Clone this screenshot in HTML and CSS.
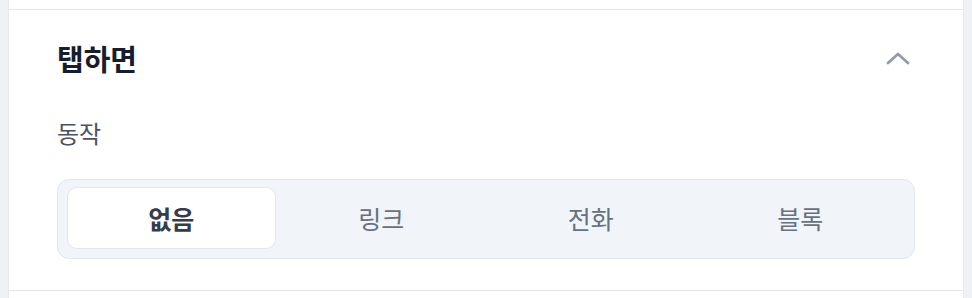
FILE: index.html
```html
<!DOCTYPE html>
<html lang="ko">
<head>
<meta charset="utf-8">
<link rel="stylesheet" href="styles.css">
</head>
<body>
<div class="panel">
  <div class="prev"></div>
  <section class="section">
    <div class="section-head">
      <h2 class="title">탭하면</h2>
      <svg class="chevron" width="24" height="14" viewBox="0 0 24 14"><path d="M2 12 L12 3 L22 12" fill="none" stroke="#939bab" stroke-width="2.8" stroke-linecap="round" stroke-linejoin="round"/></svg>
    </div>
    <div class="label">동작</div>
    <div class="segmented">
      <button class="seg active">없음</button>
      <button class="seg">링크</button>
      <button class="seg">전화</button>
      <button class="seg">블록</button>
    </div>
  </section>
  <div class="next"></div>
</div>
</body>
</html>
```
FILE: styles.css
```css
html, body {
  margin: 0;
  padding: 0;
  background: #eef1f6;
  font-family: "Noto Sans CJK KR", "Noto Sans", sans-serif;
}
.panel {
  margin: 0 8px 0 8px;
  background: #ffffff;
  height: 298px;
  border-left: 1px solid #e6e9ee;
  border-right: 1px solid #e6e9ee;
  box-sizing: border-box;
}
.prev {
  height: 9px;
  border-bottom: 1px solid #e3e6eb;
}
.section {
  height: 281px;
  box-sizing: border-box;
  padding: 0 48px;
  border-bottom: 1px solid #e3e6eb;
  display: flex;
  flex-direction: column;
}
.section-head {
  display: flex;
  align-items: center;
  justify-content: space-between;
  height: 96px;
}
.title {
  margin: 0;
  font-size: 29px;
  line-height: 36px;
  font-weight: 700;
  color: #161d2d;
}
.chevron {
  margin-right: 5px;
}
.label {
  font-size: 24px;
  color: #4b5362;
  line-height: 32px;
  margin-top: 11px;
}
.segmented {
  margin-top: 30px;
  display: grid;
  grid-template-columns: repeat(4, 1fr);
  padding: 7px 9px 9px 9px;
  background: #f1f4f9;
  border: 1px solid #e2e6ed;
  border-radius: 12px;
  height: 80px;
  box-sizing: border-box;
}
.seg {
  font-family: inherit;
  font-size: 25px;
  color: #687181;
  background: transparent;
  border: 1px solid transparent;
  border-radius: 10px;
  padding: 0;
  cursor: pointer;
}
.seg.active {
  background: #ffffff;
  border-color: #e2e6ed;
  color: #353c4a;
  font-weight: 700;
  margin-right: 1px;
}
```
